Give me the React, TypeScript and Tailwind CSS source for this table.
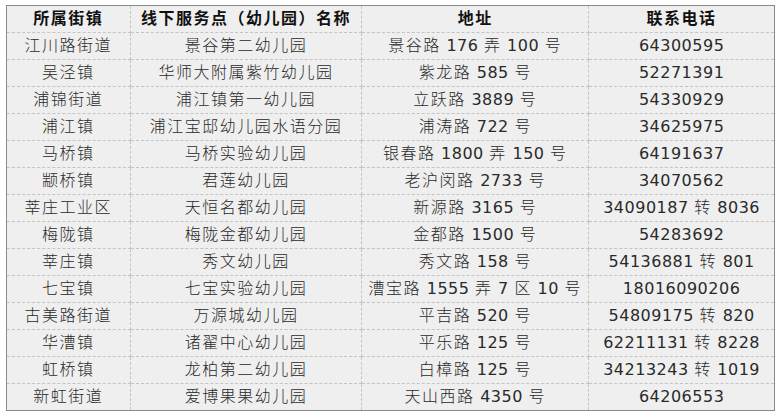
const rows: [string, string, string, string][] = [
  ['江川路街道', '景谷第二幼儿园', '景谷路 176 弄 100 号', '64300595'],
  ['吴泾镇', '华师大附属紫竹幼儿园', '紫龙路 585 号', '52271391'],
  ['浦锦街道', '浦江镇第一幼儿园', '立跃路 3889 号', '54330929'],
  ['浦江镇', '浦江宝邸幼儿园水语分园', '浦涛路 722 号', '34625975'],
  ['马桥镇', '马桥实验幼儿园', '银春路 1800 弄 150 号', '64191637'],
  ['颛桥镇', '君莲幼儿园', '老沪闵路 2733 号', '34070562'],
  ['莘庄工业区', '天恒名都幼儿园', '新源路 3165 号', '34090187 转 8036'],
  ['梅陇镇', '梅陇金都幼儿园', '金都路 1500 号', '54283692'],
  ['莘庄镇', '秀文幼儿园', '秀文路 158 号', '54136881 转 801'],
  ['七宝镇', '七宝实验幼儿园', '漕宝路 1555 弄 7 区 10 号', '18016090206'],
  ['古美路街道', '万源城幼儿园', '平吉路 520 号', '54809175 转 820'],
  ['华漕镇', '诸翟中心幼儿园', '平乐路 125 号', '62211131 转 8228'],
  ['虹桥镇', '龙柏第二幼儿园', '白樟路 125 号', '34213243 转 1019'],
  ['新虹街道', '爱博果果幼儿园', '天山西路 4350 号', '64206553'],
];

const headers = ['所属街镇', '线下服务点（幼儿园）名称', '地址', '联系电话'];

// CJK runs get wider tracking than the latin digits, like the source table
function Mixed({ text, head }: { text: string; head?: boolean }) {
  const parts = text.split(/([\u4e00-\u9fff\uff08\uff09]+)/).filter(Boolean);
  return (
    <>
      {parts.map((p, i) =>
        /[\u4e00-\u9fff\uff08\uff09]/.test(p) ? (
          <span key={i} className={`tracking-[1.5px] ${head ? 'font-bold' : 'font-light'}`}>{p}</span>
        ) : (
          <span key={i} className="tracking-[0.5px]">{p}</span>
        )
      )}
    </>
  );
}

export default function App() {
  return (
    <div className="w-[781px] h-[417px] bg-white pl-[6px] pt-[5px]">
      <table className="w-[769px] border-collapse border border-[#8a8a8a] bg-[#efefef] text-center text-[16px] text-[#2a2a2a] [font-family:'DejaVu_Sans','Noto_Sans_CJK_SC',sans-serif]">
        <colgroup>
          <col className="w-[124px]" />
          <col className="w-[232px]" />
          <col className="w-[227px]" />
          <col className="w-[186px]" />
        </colgroup>
        <thead>
          <tr className="h-[27px]">
            {headers.map((h, i) => (
              <th
                key={i}
                className="border border-dashed border-[#c4c4c4] p-0 font-bold text-[#111] leading-none"
              >
                <Mixed text={h} head />
              </th>
            ))}
          </tr>
        </thead>
        <tbody>
          {rows.map((r, i) => (
            <tr key={i} className="h-[27px]">
              {r.map((c, j) => (
                <td
                  key={j}
                  className="border border-dashed border-[#c4c4c4] p-0 leading-none whitespace-nowrap font-normal"
                >
                  <Mixed text={c} />
                </td>
              ))}
            </tr>
          ))}
        </tbody>
      </table>
    </div>
  );
}
